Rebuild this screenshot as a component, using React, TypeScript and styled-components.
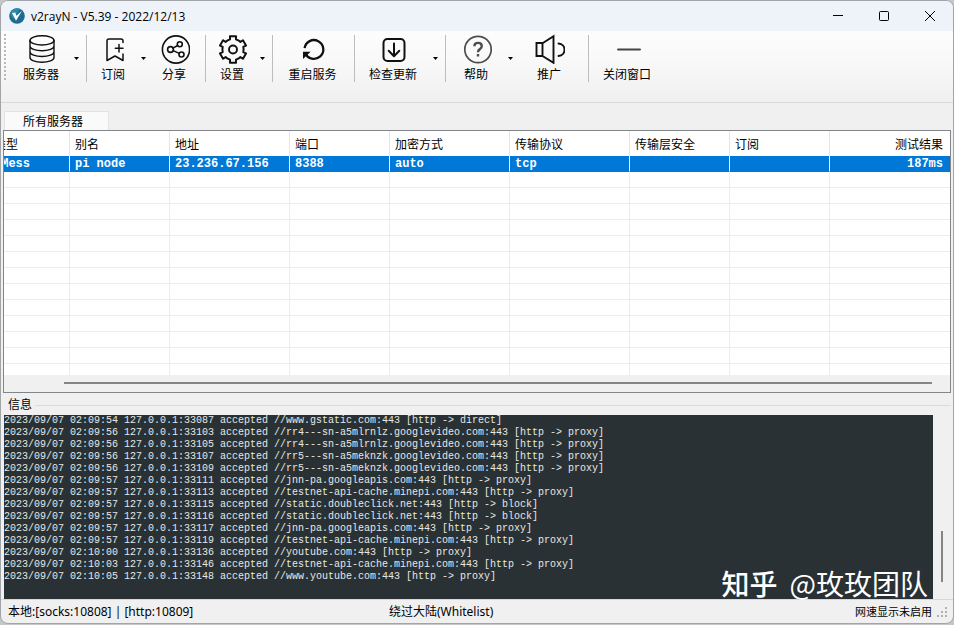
import React from "react";
import styled, { createGlobalStyle } from "styled-components";

const GlobalStyle = createGlobalStyle`
  *, *::before, *::after { box-sizing: border-box; }
  body {
    margin: 0;
    background: #c4c6c8;
    font-family: "Noto Sans", "Noto Sans CJK SC", sans-serif;
    font-size: 12px;
    color: #000;
  }
  button, textarea { font: inherit; color: inherit; }
`;

const AppWindow = styled.main`
  display: flex;
  flex-direction: column;
  min-height: calc(100vh - 1px);
  background: #f0f0f0;
  border: 1px solid #a2a5a8;
  border-radius: 8px;
  overflow: hidden;
`;

const TitleBar = styled.header`
  display: flex;
  align-items: center;
  height: 30px;
  padding-left: 8px;
  background: #eef3fa;
`;

const Title = styled.h1`
  flex: 1;
  margin: 0 0 0 6px;
  font-family: "Open Sans", sans-serif;
  font-size: 12px;
  font-weight: 400;
`;

const CaptionButton = styled.button`
  display: grid;
  place-items: center;
  width: 46px;
  height: 30px;
  padding: 0;
  border: 0;
  background: transparent;
`;

const ToolBar = styled.nav`
  display: flex;
  height: 72px;
  padding: 3px 0 0 3px;
  background: linear-gradient(#fdfdfd, #f9f9f9 40%, #f0f0f0);
  border-bottom: 1px solid #d9d9d9;
`;

const Grip = styled.div`
  width: 2px;
  height: 48px;
  margin-right: 8px;
  background: repeating-linear-gradient(#b8b8b8 0 2px, transparent 2px 4px);
`;

const ToolButton = styled.button<{ $width: number }>`
  display: flex;
  flex-direction: column;
  align-items: center;
  gap: 2px;
  width: ${(p) => p.$width}px;
  height: 50px;
  padding: 0 2px 0 0;
  border: 0;
  background: transparent;
  line-height: 18px;
  white-space: nowrap;

  svg { display: block; flex: none; }
`;

const DropButton = styled.button`
  display: grid;
  place-items: center;
  width: 12px;
  height: 49px;
  padding: 0;
  border: 0;
  background: transparent;
`;

const Separator = styled.div`
  width: 1px;
  height: 47px;
  margin: 1px 4px 0;
  background: #bdbdbd;
`;

const TabStrip = styled.div`
  display: flex;
  padding: 8px 0 0 3px;
`;

const Tab = styled.button`
  width: 105px;
  height: 19px;
  padding: 1px 0 0 18px;
  border: 1px solid #e3e3e3;
  border-bottom: 0;
  background: #fafafa;
  line-height: 18px;
  text-align: left;
`;

const ServerPanel = styled.section`
  margin: 0 2px;
  border: 1px solid #82868a;
  background: #fff;
  overflow: hidden;
`;

const TableView = styled.div`
  margin-left: -20px;
  height: 244px;
  overflow: hidden;
`;

const ServerTable = styled.table`
  width: 100%;
  table-layout: fixed;
  border-collapse: separate;
  border-spacing: 0;
`;

const HeadCell = styled.th<{ $end?: boolean }>`
  height: 25px;
  padding: 0 7px 0 5px;
  border-right: 1px solid #e5e5e5;
  font-weight: 400;
  text-align: ${(p) => (p.$end ? "right" : "left")};
  white-space: nowrap;

  &:first-child { padding-left: 10px; }
  &:last-child { border-right: 0; }
`;

const Cell = styled.td<{ $selected?: boolean; $end?: boolean }>`
  height: 16px;
  padding: 2px 7px 0 5px;
  border-right: 1px solid ${(p) => (p.$selected ? "#fff" : "#ececec")};
  border-bottom: 1px solid ${(p) => (p.$selected ? "#0078d7" : "#ececec")};
  background: ${(p) => (p.$selected ? "#0078d7" : "#fff")};
  color: #fff;
  font-family: "Liberation Mono", monospace;
  font-size: 12px;
  font-weight: 700;
  line-height: 13px;
  text-align: ${(p) => (p.$end ? "right" : "left")};
  white-space: nowrap;

  &:first-child { padding-left: 10px; }
  &:last-child { border-right: 0; }
`;

const HorizontalScroll = styled.div`
  height: 17px;
  padding: 7px 18px 0 60px;
  background: #f0f0f0;
`;

const HorizontalThumb = styled.div`
  height: 2px;
  background: #858585;
`;

const LogPanel = styled.section`
  padding-left: 3px;
`;

const LogTitle = styled.h2`
  display: flex;
  align-items: center;
  gap: 3px;
  height: 22px;
  margin: 0;
  padding: 0 2px 0 4px;
  font-size: 12px;
  font-weight: 400;

  &::after {
    content: "";
    flex: 1;
    height: 1px;
    margin-top: 2px;
    background: #dcdcdc;
  }
`;

const LogBody = styled.div`
  position: relative;
  display: flex;
`;

const LogText = styled.textarea`
  flex: 1;
  height: 184px;
  padding: 0;
  border: 0;
  outline: 0;
  resize: none;
  overflow: hidden;
  background: #293134;
  color: #e6e8e8;
  font-family: "Liberation Mono", monospace;
  font-size: 10px;
  line-height: 12px;
  white-space: pre;
`;

const VerticalScroll = styled.div`
  display: flex;
  justify-content: center;
  align-items: flex-end;
  width: 20px;
  padding: 0 2px 17px 0;
`;

const VerticalThumb = styled.div`
  width: 2px;
  height: 51px;
  background: #858585;
`;

const Watermark = styled.div`
  position: absolute;
  right: 25px;
  bottom: -2px;
  display: flex;
  gap: 12px;
  color: #fff;
  font-family: "Noto Sans CJK SC", sans-serif;
  font-size: 28px;
  line-height: 36px;
  pointer-events: none;

  strong { font-weight: 500; }
`;

const StatusBar = styled.footer`
  display: grid;
  grid-template-columns: 381px 1fr auto auto;
  align-items: center;
  height: 24px;
  padding: 0 5px 0 7px;
  border-top: 1px solid #d7d7d7;
  line-height: 18px;
`;

const Speed = styled.span`
  margin-right: 4px;
  font-size: 11px;
`;

const line = {
  fill: "none",
  stroke: "#111",
  strokeWidth: 1.6,
  strokeLinejoin: "round" as const,
  strokeLinecap: "round" as const,
};

function Icon({ children }: { children: React.ReactNode }) {
  return (
    <svg width="32" height="30" viewBox="0 0 32 30" aria-hidden="true" {...line}>
      {children}
    </svg>
  );
}

const toothProfile = [
  [-30, 10.6],
  [-16, 10.6],
  [-13, 13.6],
  [13, 13.6],
  [16, 10.6],
];

const gearPoints = Array.from({ length: 6 }, (_, i) =>
  toothProfile
    .map(([offset, radius]) => {
      const angle = ((i * 60 - 90 + offset) * Math.PI) / 180;
      return `${(17 + radius * Math.cos(angle)).toFixed(2)},${(15.5 + radius * Math.sin(angle)).toFixed(2)}`;
    })
    .join(" "),
).join(" ");

const icons = {
  servers: (
    <Icon>
      <g strokeWidth="1.4">
        <ellipse cx="17" cy="6.4" rx="12" ry="4.6" />
        <path d="M5 6.4v17.2c0 2.6 5.4 4.7 12 4.7s12-2.1 12-4.7V6.4M5 12.1c0 2.6 5.4 4.7 12 4.7s12-2.1 12-4.7M5 17.8c0 2.6 5.4 4.7 12 4.7s12-2.1 12-4.7" />
      </g>
    </Icon>
  ),
  subscribe: (
    <Icon>
      <path d="M26 8.5V7q0-2-2-2H12q-2 0-2 2v19.5l8-4.5 8 4.5V20M22 10.5v7.5M18.3 14.2H26" strokeWidth="1.5" />
    </Icon>
  ),
  share: (
    <Icon>
      <circle cx="18" cy="15.5" r="13.6" />
      <circle cx="12.5" cy="15.5" r="2.9" />
      <circle cx="21.8" cy="10.2" r="2.5" />
      <circle cx="23.5" cy="20.5" r="2.5" />
      <path d="m15 14.1 4.6-2.6M15.2 16.6l6 2.8" />
    </Icon>
  ),
  settings: (
    <Icon>
      <polygon points={gearPoints} strokeWidth="2" />
      <circle cx="17" cy="15.5" r="4" strokeWidth="1.9" />
    </Icon>
  ),
  restart: (
    <Icon>
      <path d="M8.2 19A9.4 9.4 0 1 0 7.6 14.2" strokeWidth="2.3" strokeLinecap="butt" />
      <path d="M6 17.8h7.6L6 25z" fill="#111" stroke="none" />
    </Icon>
  ),
  update: (
    <Icon>
      <rect x="6.5" y="5" width="21" height="22" rx="4" strokeWidth="2" />
      <path d="M17 9.5v12.5M11.7 16.8l5.3 5.4 5.3-5.4" strokeWidth="2" />
    </Icon>
  ),
  help: (
    <Icon>
      <g stroke="#4d4d4d">
        <circle cx="18" cy="15.5" r="13.2" strokeWidth="1.7" />
        <path d="M14.3 12.2q.2-3.3 3.8-3.3t3.7 3.2q0 1.9-1.9 3t-1.9 3.1" strokeWidth="2.4" strokeLinecap="butt" />
        <path d="M18 20v2.4" strokeWidth="2.4" strokeLinecap="butt" />
      </g>
    </Icon>
  ),
  promote: (
    <Icon>
      <path d="M3.5 9h6v13h-6zM9.5 9.3 20.5 2.2v26.6L9.5 22M25.5 9.5c8 .5 8 12 0 12.5" strokeWidth="1.9" strokeLinejoin="miter" />
    </Icon>
  ),
  close: (
    <Icon>
      <path d="M7 15.5h22" stroke="#444" strokeWidth="1.9" />
    </Icon>
  ),
};

type Tool = { label: string; icon: keyof typeof icons; width: number; menu?: boolean; divider?: boolean };

const tools: Tool[] = [
  { label: "服务器", icon: "servers", width: 56, menu: true, divider: true },
  { label: "订阅", icon: "subscribe", width: 46, menu: true },
  { label: "分享", icon: "share", width: 52, divider: true },
  { label: "设置", icon: "settings", width: 46, menu: true, divider: true },
  { label: "重启服务", icon: "restart", width: 73, divider: true },
  { label: "检查更新", icon: "update", width: 70, menu: true, divider: true },
  { label: "帮助", icon: "help", width: 54, menu: true },
  { label: "推广", icon: "promote", width: 68, divider: true },
  { label: "关闭窗口", icon: "close", width: 70 },
];

const columns = [
  { title: "类型", value: "VMess", width: 86 },
  { title: "别名", value: "pi node", width: 100 },
  { title: "地址", value: "23.236.67.156", width: 120 },
  { title: "端口", value: "8388", width: 100 },
  { title: "加密方式", value: "auto", width: 120 },
  { title: "传输协议", value: "tcp", width: 120 },
  { title: "传输层安全", value: "", width: 100 },
  { title: "订阅", value: "", width: 100 },
  { title: "测试结果", value: "187ms", end: true },
];

const emptyRows = Array.from({ length: 13 }, (_, i) => i);

const log = [
  "2023/09/07 02:09:54 127.0.0.1:33087 accepted //www.gstatic.com:443 [http -> direct]",
  "2023/09/07 02:09:56 127.0.0.1:33103 accepted //rr4---sn-a5mlrnlz.googlevideo.com:443 [http -> proxy]",
  "2023/09/07 02:09:56 127.0.0.1:33105 accepted //rr4---sn-a5mlrnlz.googlevideo.com:443 [http -> proxy]",
  "2023/09/07 02:09:56 127.0.0.1:33107 accepted //rr5---sn-a5meknzk.googlevideo.com:443 [http -> proxy]",
  "2023/09/07 02:09:56 127.0.0.1:33109 accepted //rr5---sn-a5meknzk.googlevideo.com:443 [http -> proxy]",
  "2023/09/07 02:09:57 127.0.0.1:33111 accepted //jnn-pa.googleapis.com:443 [http -> proxy]",
  "2023/09/07 02:09:57 127.0.0.1:33113 accepted //testnet-api-cache.minepi.com:443 [http -> proxy]",
  "2023/09/07 02:09:57 127.0.0.1:33115 accepted //static.doubleclick.net:443 [http -> block]",
  "2023/09/07 02:09:57 127.0.0.1:33116 accepted //static.doubleclick.net:443 [http -> block]",
  "2023/09/07 02:09:57 127.0.0.1:33117 accepted //jnn-pa.googleapis.com:443 [http -> proxy]",
  "2023/09/07 02:09:57 127.0.0.1:33119 accepted //testnet-api-cache.minepi.com:443 [http -> proxy]",
  "2023/09/07 02:10:00 127.0.0.1:33136 accepted //youtube.com:443 [http -> proxy]",
  "2023/09/07 02:10:03 127.0.0.1:33146 accepted //testnet-api-cache.minepi.com:443 [http -> proxy]",
  "2023/09/07 02:10:05 127.0.0.1:33148 accepted //www.youtube.com:443 [http -> proxy]",
].join("\n");

export default function App() {
  return (
    <>
      <GlobalStyle />
      <AppWindow>
        <TitleBar>
          <svg width="16" height="16" viewBox="0 0 16 16" aria-hidden="true">
            <circle cx="8" cy="8" r="7.8" fill="#1c6c91" />
            <path d="M1 5a7.6 7.6 0 0 1 10-4L4 11z" fill="#2c88ae" />
            <path d="M3 5 6.2 4.4l1.2 3.4L13 2.8 7 12.8z" fill="#fff" />
          </svg>
          <Title>v2rayN - V5.39 - 2022/12/13</Title>
          <CaptionButton aria-label="最小化">
            <svg width="10" height="10" viewBox="0 0 10 10" fill="none" stroke="#000"><path d="M0 4.5h10" /></svg>
          </CaptionButton>
          <CaptionButton aria-label="最大化">
            <svg width="10" height="10" viewBox="0 0 10 10" fill="none" stroke="#000"><rect x=".5" y=".5" width="9" height="9" rx="1" /></svg>
          </CaptionButton>
          <CaptionButton aria-label="关闭">
            <svg width="10" height="10" viewBox="0 0 10 10" fill="none" stroke="#000"><path d="m0 0 10 10M10 0 0 10" /></svg>
          </CaptionButton>
        </TitleBar>

        <ToolBar>
          <Grip />
          {tools.map((tool) => (
            <React.Fragment key={tool.label}>
              <ToolButton $width={tool.width}>
                {icons[tool.icon]}
                {tool.label}
              </ToolButton>
              {tool.menu && (
                <DropButton aria-label={`${tool.label}菜单`}>
                  <svg width="5" height="3" viewBox="0 0 5 3"><path d="M0 0h5L2.5 3z" /></svg>
                </DropButton>
              )}
              {tool.divider && <Separator />}
            </React.Fragment>
          ))}
        </ToolBar>

        <TabStrip role="tablist">
          <Tab role="tab" aria-selected="true">所有服务器</Tab>
        </TabStrip>

        <ServerPanel>
          <TableView>
            <ServerTable>
              <colgroup>
                {columns.map((c, i) => <col key={i} width={c.width} />)}
              </colgroup>
              <thead>
                <tr>
                  {columns.map((c, i) => <HeadCell key={i} scope="col" $end={c.end}>{c.title}</HeadCell>)}
                </tr>
              </thead>
              <tbody>
                <tr>
                  {columns.map((c, i) => <Cell key={i} $selected $end={c.end}>{c.value}</Cell>)}
                </tr>
                {emptyRows.map((row) => (
                  <tr key={row}>
                    {columns.map((_, i) => <Cell key={i} />)}
                  </tr>
                ))}
              </tbody>
            </ServerTable>
          </TableView>
          <HorizontalScroll><HorizontalThumb /></HorizontalScroll>
        </ServerPanel>

        <LogPanel>
          <LogTitle id="log-title">信息</LogTitle>
          <LogBody>
            <LogText aria-labelledby="log-title" readOnly wrap="off" value={log} />
            <VerticalScroll><VerticalThumb /></VerticalScroll>
            <Watermark><strong>知乎</strong><span>@玫玫团队</span></Watermark>
          </LogBody>
        </LogPanel>

        <StatusBar>
          <span>本地:[socks:10808] | [http:10809]</span>
          <span>绕过大陆(Whitelist)</span>
          <Speed>网速显示未启用</Speed>
          <svg width="12" height="12" viewBox="0 0 12 12" fill="#b0b0b0" aria-hidden="true">
            <path d="M9 1h2v2H9zM9 5h2v2H9zM9 9h2v2H9zM5 5h2v2H5zM5 9h2v2H5zM1 9h2v2H1z" />
          </svg>
        </StatusBar>
      </AppWindow>
    </>
  );
}
